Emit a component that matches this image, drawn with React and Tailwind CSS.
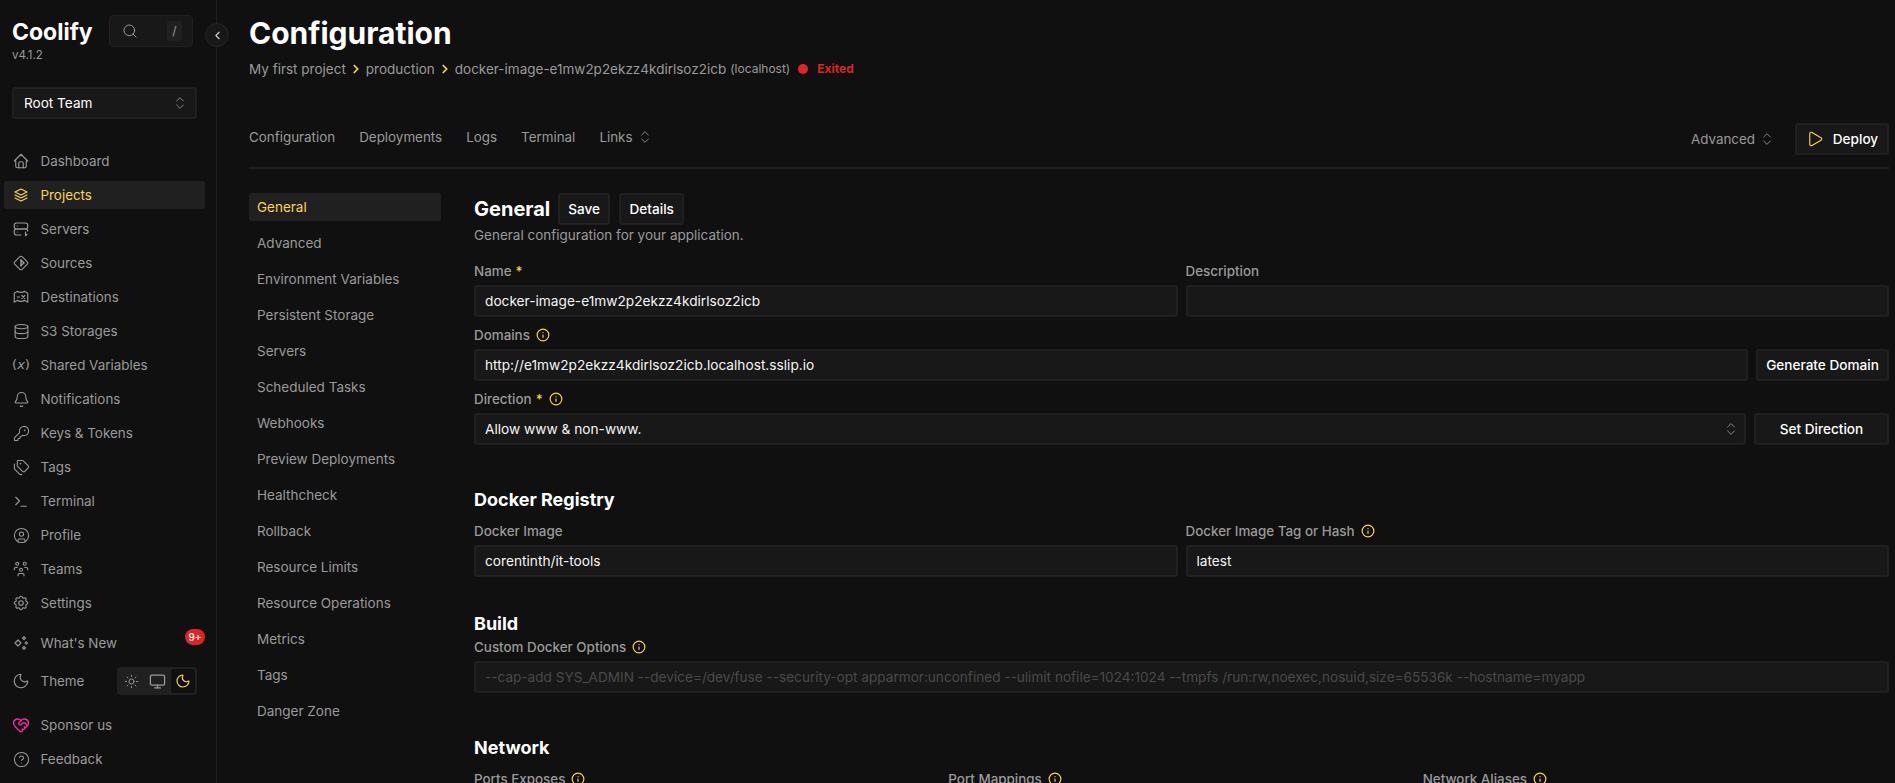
import { Search, ChevronsUpDown, ChevronLeft, ChevronRight, Info, Play, Sun, Monitor, Moon, HeartHandshake, CircleHelp, Database, Bell, KeyRound, Tags, CircleUser } from "lucide-react";

// iconos del menu lateral, dibujados a mano donde lucide no tiene el mismo
function Ico({ children, className = "text-[#9a9a9a]" }) {
  return (
    <svg viewBox="0 0 24 24" fill="none" stroke="currentColor" strokeWidth="1.5" strokeLinecap="round" strokeLinejoin="round" className={`w-[18px] h-[18px] shrink-0 ${className}`}>
      {children}
    </svg>
  );
}

const lu = "w-[17px] h-[17px] mx-[0.5px] shrink-0 text-[#9a9a9a]";

const menu = [
  { label: "Dashboard", icon: <Ico><path d="M5 12H3l9-9l9 9h-2M5 12v7a2 2 0 0 0 2 2h10a2 2 0 0 0 2-2v-7" /><path d="M9 21v-6a2 2 0 0 1 2-2h2a2 2 0 0 1 2 2v6" /></Ico> },
  { label: "Projects", active: true, icon: <Ico className="text-[#fcd452]"><path d="M12 4L4 8l8 4l8-4l-8-4" /><path d="M4 12l8 4l8-4" /><path d="M4 16l8 4l8-4" /></Ico> },
  { label: "Servers", icon: <Ico><path d="M3 7a3 3 0 0 1 3-3h12a3 3 0 0 1 3 3v2a3 3 0 0 1-3 3H6a3 3 0 0 1-3-3z" /><path d="M12 20H6a3 3 0 0 1-3-3v-2a3 3 0 0 1 3-3h12a3 3 0 0 1 3 3" /><path d="M7 8v.01M7 16v.01" /><path d="M18 16v5l2-2" /></Ico> },
  { label: "Sources", icon: <Ico><path d="M10.5 3.6a2 2 0 0 1 3 0l6.9 6.9a2 2 0 0 1 0 3l-6.9 6.9a2 2 0 0 1-3 0l-6.9-6.9a2 2 0 0 1 0-3z" /><path d="M12 8v8" strokeWidth="2" /><path d="M12 8l4 4l-4 3" strokeWidth="2" /></Ico> },
  { label: "Destinations", icon: <Ico><path d="M3 7l4-2.5q5 2.5 10 0l4 2.5v12l-4-2.5q-5 2.5-10 0l-4 2.5z" /><path d="M13 10l4 4M17 10l-4 4" /><path d="M7 12h3" /></Ico> },
  { label: "S3 Storages", icon: <Database className={lu} strokeWidth={1.5} /> },
  { label: "Shared Variables", icon: <span className="w-[18px] shrink-0 text-center text-[13px] font-medium text-[#9a9a9a] [font-family:'DejaVu_Sans',sans-serif] whitespace-nowrap">(<i>x</i>)</span> },
  { label: "Notifications", icon: <Bell className={lu} strokeWidth={1.5} /> },
  { label: "Keys & Tokens", icon: <KeyRound className={lu} strokeWidth={1.5} /> },
  { label: "Tags", icon: <Tags className={lu} strokeWidth={1.5} /> },
  { label: "Terminal", icon: <Ico><path d="M5 7l5 5l-5 5" /><path d="M12 19h7" /></Ico> },
  { label: "Profile", icon: <CircleUser className={lu} strokeWidth={1.5} /> },
  { label: "Teams", icon: <Ico><path d="M10 13a2 2 0 1 0 4 0a2 2 0 0 0-4 0" /><path d="M8 21v-1a2 2 0 0 1 2-2h4a2 2 0 0 1 2 2v1" /><path d="M15 5a2 2 0 1 0 4 0a2 2 0 0 0-4 0" /><path d="M17 10h2a2 2 0 0 1 2 2v1" /><path d="M5 5a2 2 0 1 0 4 0a2 2 0 0 0-4 0" /><path d="M3 13v-1a2 2 0 0 1 2-2h2" /></Ico> },
  { label: "Settings", icon: <Ico><path d="M10.325 4.317c.426-1.756 2.924-1.756 3.35 0a1.724 1.724 0 0 0 2.573 1.066c1.543-.94 3.31.826 2.37 2.37a1.724 1.724 0 0 0 1.065 2.572c1.756.426 1.756 2.924 0 3.35a1.724 1.724 0 0 0-1.066 2.573c.94 1.543-.826 3.31-2.37 2.37a1.724 1.724 0 0 0-2.572 1.065c-.426 1.756-2.924 1.756-3.35 0a1.724 1.724 0 0 0-2.573-1.066c-1.543.94-3.31-.826-2.37-2.37a1.724 1.724 0 0 0-1.065-2.572c-1.756-.426-1.756-2.924 0-3.35a1.724 1.724 0 0 0 1.066-2.573c-.94-1.543.826-3.31 2.37-2.37c1 .608 2.296.07 2.572-1.065" /><circle cx="12" cy="12" r="3" /></Ico> },
];

const secciones = ["General", "Advanced", "Environment Variables", "Persistent Storage", "Servers", "Scheduled Tasks", "Webhooks", "Preview Deployments", "Healthcheck", "Rollback", "Resource Limits", "Resource Operations", "Metrics", "Tags", "Danger Zone"];

const inputCls = "h-8 w-full rounded-[3px] bg-[#181818] border-2 border-[#202020] pl-[9px] pr-[9px] flex items-center whitespace-nowrap overflow-hidden";
const btnCls = "h-8 rounded-[3px] bg-[#181818] border-2 border-[#202020] flex items-center justify-center text-[13.6px] font-medium text-white whitespace-nowrap";
const chevrons = "w-[16px] h-[16px] shrink-0";

function Label({ text, req, info }) {
  return (
    <div className="h-[14px] flex items-center gap-[6px] text-[13.4px] font-medium text-[#9a9a9a] whitespace-nowrap">
      <span>{text}{req && <span className="text-[#fcd452] ml-1">*</span>}</span>
      {info && <Info className="w-[14px] h-[14px] text-[#fcd452]" strokeWidth={2} />}
    </div>
  );
}

function Field({ label, req, info, value, placeholder, right }) {
  return (
    <div className="flex flex-col gap-[7px] min-w-0 flex-1">
      <Label text={label} req={req} info={info} />
      <div className="flex gap-2">
        <div className={`${inputCls} flex-1 ${placeholder ? "text-[#4a4a4a] text-[13.6px]" : "text-[#f5f5f5] text-[13.7px]"}`}>{value || placeholder}</div>
        {right}
      </div>
    </div>
  );
}

function NavItem({ item }) {
  return (
    <div className={`h-7 ml-1 w-[201px] rounded-[3px] px-2 flex items-center gap-[10.5px] text-[13.4px] whitespace-nowrap ${item.active ? "bg-[#202020] text-[#fcd452]" : "text-[#9a9a9a]"}`}>
      {item.icon}
      <span>{item.label}</span>
    </div>
  );
}

export default function App() {
  return (
    <div className="h-screen w-full overflow-hidden flex bg-[#101010] font-['Inter',sans-serif]">
      <aside className="w-[217px] shrink-0 h-full border-r border-[#202020] relative">
        <div className="pl-[12px] pr-[23px] pt-[16px] flex justify-between">
          <div>
            <div className="text-[23px] leading-[32px] font-bold text-white">Coolify</div>
            <div className="text-[11.5px] leading-[14px] text-[#9a9a9a]">v4.1.2</div>
          </div>
          <div className="w-[84px] h-[32px] -mt-[1px] rounded-[4px] bg-[#181818] border border-[#202020] flex items-center justify-between pl-3 pr-[10px]">
            <Search className="w-[16px] h-[16px] text-[#9a9a9a]" strokeWidth={1.5} />
            <span className="w-[15px] h-5 rounded-[2px] bg-[#202020] text-center text-xs leading-5 text-[#9a9a9a]">/</span>
          </div>
        </div>
        <button className="absolute left-[205px] top-[23px] w-6 h-6 rounded-full bg-[#181818] border border-[#242424] flex items-center justify-center z-10">
          <ChevronLeft className="w-[13px] h-[13px] text-[#d4d4d4]" strokeWidth={2} />
        </button>
        <div className="ml-3 w-[185px] mt-[25px] h-8 rounded-[3px] bg-[#181818] border-2 border-[#202020] flex items-center justify-between pl-[10px] pr-[7px] text-[13.6px] text-white">
          <span>Root Team</span>
          <ChevronsUpDown className={`${chevrons} text-[#9a9a9a]`} strokeWidth={1.3} />
        </div>
        <nav className="mt-[28px] flex flex-col gap-[6px]">
          {menu.map((m) => <NavItem key={m.label} item={m} />)}
        </nav>
        <div className="relative mt-[12px] h-7 ml-1 w-[209px] px-2 flex items-center gap-[10.5px] text-[13.4px] text-[#9a9a9a]">
          <Ico>
            <path d="M8 8l4 4l-4 4l-4-4z" />
            <path d="M16 3.5l2 2l-2 2l-2-2z" />
            <path d="M16 16.5l2 2l-2 2l-2-2z" />
            <path d="M19 10.5l1.5 1.5l-1.5 1.5l-1.5-1.5z" />
          </Ico>
          <span>What's New</span>
          <span className="absolute right-2 top-0 w-5 h-4 rounded-full bg-[#dc2626] text-center text-[10px] leading-4 font-medium text-white">9+</span>
        </div>
        <div className="mt-[10px] h-7 ml-1 w-[209px] pl-2 flex items-center gap-[10.5px] text-[13.4px] text-[#9a9a9a]">
          <Moon className="w-[18px] h-[18px] shrink-0 text-[#9a9a9a]" strokeWidth={1.5} />
          <span>Theme</span>
          <div className="ml-auto mr-[16px] w-[80px] h-7 rounded-[4px] bg-[#202020] flex items-center pl-[1px]">
            <span className="w-[26px] flex justify-center"><Sun className="w-[15px] h-[15px] text-[#9a9a9a]" strokeWidth={1.5} /></span>
            <span className="w-[26px] flex justify-center"><Monitor className="w-[17px] h-[17px] text-[#9a9a9a]" strokeWidth={1.8} /></span>
            <span className="w-[26px] flex justify-center">
              <span className="w-6 h-6 rounded-[3px] bg-[#101010] flex items-center justify-center">
                <Moon className="w-[16px] h-[16px] text-[#fcd452]" strokeWidth={1.7} />
              </span>
            </span>
          </div>
        </div>
        <div className="mt-[16px] h-7 ml-1 w-[201px] px-2 flex items-center gap-[10.5px] text-[13.4px] text-[#9a9a9a]">
          <HeartHandshake className="w-[18px] h-[18px] shrink-0 text-[#ec2f9b]" strokeWidth={1.9} />
          <span>Sponsor us</span>
        </div>
        <div className="mt-[6px] h-7 ml-1 w-[201px] px-2 flex items-center gap-[10.5px] text-[13.4px] text-[#9a9a9a]">
          <CircleHelp className={lu} strokeWidth={1.5} />
          <span>Feedback</span>
        </div>
      </aside>

      <main className="flex-1 min-w-0 pl-8 pr-[6px] h-full overflow-hidden">
        <h1 className="pt-[15px] text-3xl leading-9 font-bold text-white">Configuration</h1>
        <div className="mt-[8px] flex items-center h-5 text-[13.5px] text-[#9a9a9a] whitespace-nowrap">
          <span>My first project</span>
          <ChevronRight className="w-[14px] h-[14px] mx-[3px] text-[#fcd452]" strokeWidth={3} />
          <span>production</span>
          <ChevronRight className="w-[14px] h-[14px] mx-[3px] text-[#fcd452]" strokeWidth={3} />
          <span>docker-image-e1mw2p2ekzz4kdirlsoz2icb</span>
          <span className="ml-1 text-xs">(localhost)</span>
          <span className="ml-[8px] w-[10px] h-[10px] rounded-full bg-[#dc2626]" />
          <span className="ml-[9px] text-xs font-bold text-[#dc2626]">Exited</span>
        </div>

        <div className="mt-[44px] h-8 flex items-center justify-between text-[13.4px] text-[#9a9a9a]">
          <div className="flex items-center gap-6 mb-[3px]">
            <span>Configuration</span>
            <span>Deployments</span>
            <span>Logs</span>
            <span>Terminal</span>
            <span className="flex items-center gap-[4px]">Links <ChevronsUpDown className={chevrons} strokeWidth={1.3} /></span>
          </div>
          <div className="flex items-center gap-[20px]">
            <span className="flex items-center gap-[4px]">Advanced <ChevronsUpDown className={chevrons} strokeWidth={1.3} /></span>
            <div className={`${btnCls} w-[94px] gap-[9px]`}>
              <Play className="w-[18px] h-[18px] text-[#fcd452]" strokeWidth={1.5} />
              Deploy
            </div>
          </div>
        </div>
        <div className="mt-[12px] h-[2px] bg-[#202020]" />

        <div className="mt-[24px] flex">
          <div className="w-[192px] shrink-0 flex flex-col gap-2">
            {secciones.map((s, i) => (
              <div key={s} className={`h-7 rounded-[3px] px-2 flex items-center text-[13.5px] ${i === 0 ? "bg-[#202020] text-[#fcd452]" : "text-[#9a9a9a]"}`}>{s}</div>
            ))}
          </div>

          <div className="flex-1 min-w-0 ml-[33px]">
            <div className="flex items-center h-8 gap-2">
              <h2 className="text-xl font-bold text-white">General</h2>
              <div className={`${btnCls} w-[52px]`}>Save</div>
              <div className={`${btnCls} w-[65px] ml-[1px]`}>Details</div>
            </div>
            <p className="h-5 text-[13.5px] leading-5 text-[#9a9a9a]">General configuration for your application.</p>

            <div className="mt-[19px] flex flex-col gap-[11px]">
              <div className="flex gap-2">
                <Field label="Name" req value="docker-image-e1mw2p2ekzz4kdirlsoz2icb" />
                <Field label="Description" value=" " />
              </div>
              <Field label="Domains" info value="http://e1mw2p2ekzz4kdirlsoz2icb.localhost.sslip.io" right={<div className={`${btnCls} w-[133px] shrink-0`}>Generate Domain</div>} />
              <div className="flex flex-col gap-[7px]">
                <Label text="Direction" req info />
                <div className="flex gap-2">
                  <div className={`${inputCls} flex-1 justify-between text-[#f5f5f5] text-[13.7px]`}>
                    <span>Allow www & non-www.</span>
                    <ChevronsUpDown className={`${chevrons} -mr-[4px] text-[#9a9a9a]`} strokeWidth={1.3} />
                  </div>
                  <div className={`${btnCls} w-[135px] shrink-0`}>Set Direction</div>
                </div>
              </div>
            </div>

            <h3 className="mt-[41px] h-7 text-lg leading-7 font-bold text-white">Docker Registry</h3>
            <div className="mt-[10px] flex gap-2">
              <Field label="Docker Image" value="corentinth/it-tools" />
              <Field label="Docker Image Tag or Hash" info value="latest" />
            </div>

            <h3 className="mt-[33px] h-7 text-lg leading-7 font-bold text-white">Build</h3>
            <div className="mt-[2px] flex">
              <Field label="Custom Docker Options" info placeholder="--cap-add SYS_ADMIN --device=/dev/fuse --security-opt apparmor:unconfined --ulimit nofile=1024:1024 --tmpfs /run:rw,noexec,nosuid,size=65536k --hostname=myapp" />
            </div>

            <h3 className="mt-[41px] h-7 text-lg leading-7 font-bold text-white">Network</h3>
            <div className="mt-[10px] flex gap-2">
              <Field label="Ports Exposes" info value=" " />
              <Field label="Port Mappings" info value=" " />
              <Field label="Network Aliases" info value=" " />
            </div>
          </div>
        </div>
      </main>
    </div>
  );
}
